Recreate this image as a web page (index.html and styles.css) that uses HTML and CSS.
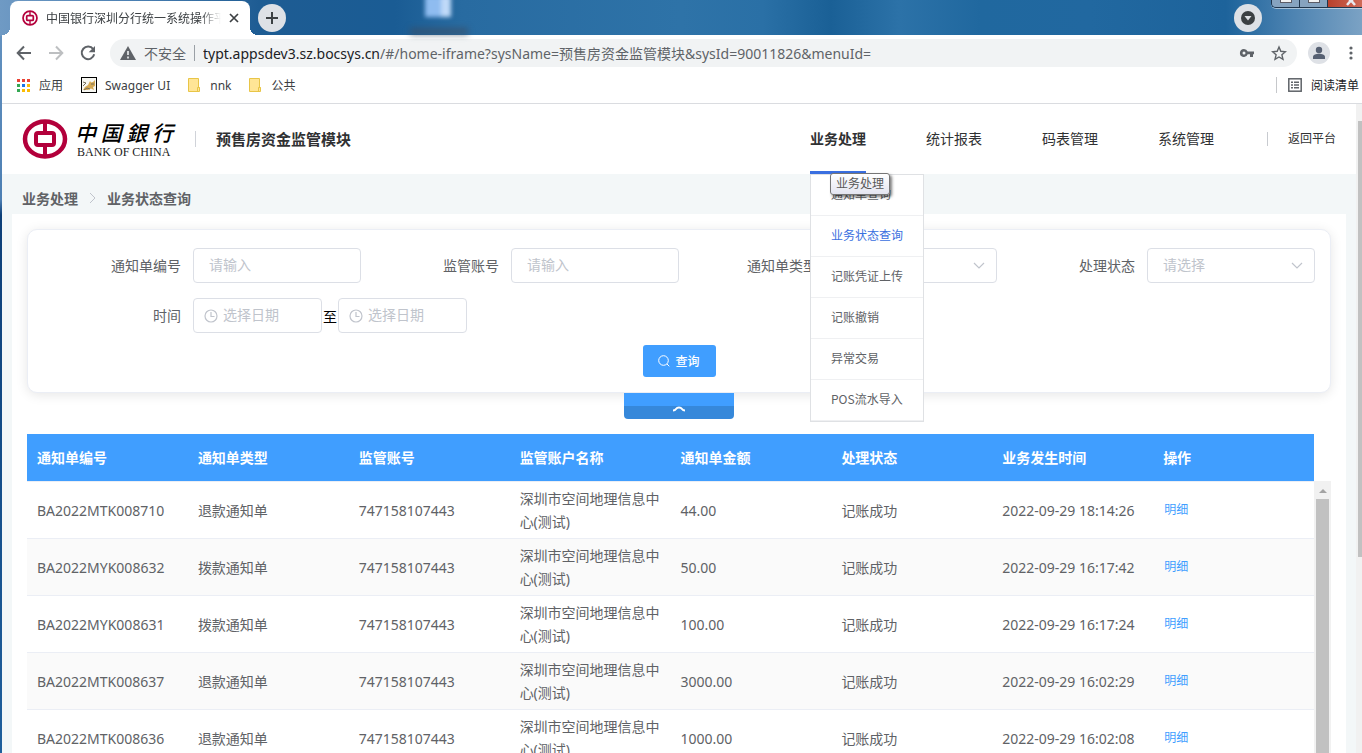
FILE: index.html
```html
<!DOCTYPE html>
<html lang="zh-CN">
<head>
<meta charset="utf-8">
<title>中国银行深圳分行统一系统操作平台</title>
<link rel="stylesheet" href="styles.css">
</head>
<body>
<div class="desktop">
  <div class="desk-icon" aria-hidden="true"></div>
  <div class="desk-label" aria-hidden="true"></div>
  <div class="window-buttons">
    <button class="win-btn" aria-label="最小化"><span class="win-min"></span></button>
    <button class="win-btn" aria-label="最大化"><span class="win-max"></span></button>
    <button class="win-btn win-close" aria-label="关闭"><svg width="12" height="6" viewBox="0 0 12 6"><path d="M2 5 L5 1.500 V0 H7 V1.500 L10 5" fill="none" stroke="#e8e8ee" stroke-width="2.500"/></svg></button>
  </div>

  <div class="browser">
    <div class="tab-strip">
      <div class="tab">
        <svg class="tab-logo" width="16" height="16" viewBox="0 0 46 46"><circle cx="23" cy="23" r="20" fill="none" stroke="#b4003c" stroke-width="5"/><rect x="13.500" y="16" width="19" height="14" rx="3" fill="none" stroke="#b4003c" stroke-width="5"/><path d="M23 3v12M23 31v12" stroke="#b4003c" stroke-width="4"/></svg>
        <span class="tab-title">中国银行深圳分行统一系统操作平台</span>
        <button class="tab-close" aria-label="关闭标签页"><svg width="10" height="10" viewBox="0 0 10 10"><path d="M1 1l8 8M9 1l-8 8" stroke="#3c4043" stroke-width="1.700"/></svg></button>
      </div>
      <button class="round-btn" aria-label="新标签页"><svg width="14" height="14" viewBox="0 0 14 14"><path d="M7 1v12M1 7h12" stroke="#3c4043" stroke-width="2"/></svg></button>
      <button class="round-btn tab-search" aria-label="搜索标签页"><svg width="14" height="14" viewBox="0 0 14 14"><circle cx="7" cy="7" r="7" fill="#3c4043"/><path d="M3.500 5h7L7 9.500z" fill="#dee1e6"/></svg></button>
    </div>

    <div class="toolbar">
      <button class="tool-btn" aria-label="后退"><svg width="16" height="16" viewBox="0 0 16 16"><path d="M15 8H2M8 1.500L1.700 8 8 14.500" fill="none" stroke="#5f6368" stroke-width="2"/></svg></button>
      <button class="tool-btn" aria-label="前进"><svg width="16" height="16" viewBox="0 0 16 16"><path d="M1 8h13M8 1.500L14.300 8 8 14.500" fill="none" stroke="#bdbfc1" stroke-width="2"/></svg></button>
      <button class="tool-btn" aria-label="刷新"><svg width="16" height="16" viewBox="0 0 16 16"><path d="M13.200 4.200A6.300 6.300 0 1 0 14.200 9.300" fill="none" stroke="#5f6368" stroke-width="2"/><path d="M15 1v6.300H8.700z" fill="#5f6368"/></svg></button>
      <div class="omnibox">
        <svg width="16" height="14" viewBox="0 0 16 14"><path d="M8 0l8 14H0z" fill="#5f6368"/><path d="M8 5v4M8 10.500v2" stroke="#f1f3f4" stroke-width="1.600"/></svg>
        <span class="unsafe">不安全</span>
        <span class="omni-sep"></span>
        <div class="url" role="textbox" aria-label="地址栏"><span class="url-host">typt.appsdev3.sz.bocsys.cn</span>/#/home-iframe?sysName=预售房资金监管模块&amp;sysId=90011826&amp;menuId=</div>
        <button class="omni-btn" aria-label="密码"><svg width="16" height="16" viewBox="0 0 16 16"><path fill-rule="evenodd" d="M5 4a4 4 0 1 0 3.700 5.300H11V12h3V9.300h1V6.500H8.700A4 4 0 0 0 5 4zM5 6.500a1.500 1.500 0 1 1 0 3 1.500 1.500 0 0 1 0-3z" fill="#5f6368"/></svg></button>
        <button class="omni-btn" aria-label="收藏"><svg width="16" height="16" viewBox="0 0 16 16"><path d="M8 2l1.800 4.300 4.700.4-3.600 3.100 1.100 4.600L8 12l-4 2.400 1.100-4.600L1.500 6.700l4.700-.4z" fill="none" stroke="#5f6368" stroke-width="1.400"/></svg></button>
      </div>
      <button class="profile" aria-label="用户"><svg width="14" height="14" viewBox="0 0 14 14"><circle cx="7" cy="4" r="3.200" fill="#566072"/><path d="M1 13v-2c0-2 3-3.200 6-3.200s6 1.200 6 3.200v2z" fill="#566072"/></svg></button>
      <button class="more" aria-label="更多"><svg width="4" height="14" viewBox="0 0 4 14"><circle cx="2" cy="2" r="1.600" fill="#5f6368"/><circle cx="2" cy="7" r="1.600" fill="#5f6368"/><circle cx="2" cy="12" r="1.600" fill="#5f6368"/></svg></button>
    </div>

    <div class="bookmarks">
      <a class="bookmark" href="#"><svg width="14" height="14" viewBox="0 0 14 14"><path d="M0 1h3v3H0zM5 1h3v3H5zM10 1h3v3h-3z" fill="#ea4335"/><path d="M0 6h3v3H0zM0 11h3v3H0z" fill="#34a853"/><path d="M5 6h3v3H5z" fill="#1a73e8"/><path d="M10 6h3v3h-3zM5 11h3v3H5zM10 11h3v3h-3z" fill="#fbbc04"/></svg>应用</a>
      <a class="bookmark" href="#"><svg width="16" height="16" viewBox="0 0 16 16"><rect x=".5" y=".5" width="15" height="15" fill="#f7f7f2" stroke="#000"/><path d="M2 13l2-3 3-2 2-4 1 1.500L12 5l2-2v6l-2 1 1 3-3-1.500L7 13z" fill="#d5a954"/><path d="M2 5l3 1-3 3M3 13l3-2 3 1M10 7h3" stroke="#77705c" fill="none"/></svg>Swagger UI</a>
      <a class="bookmark" href="#"><svg width="14" height="14" viewBox="0 0 14 14"><path d="M.5.5h10v9h1v4H.5z" fill="#ffe596" stroke="#e8c547"/><path d="M9.500 13V9.500h2" fill="none" stroke="#e8c547"/></svg>nnk</a>
      <a class="bookmark" href="#"><svg width="14" height="14" viewBox="0 0 14 14"><path d="M.5.5h10v9h1v4H.5z" fill="#ffe596" stroke="#e8c547"/><path d="M9.500 13V9.500h2" fill="none" stroke="#e8c547"/></svg>公共</a>
      <button class="reading-list"><svg width="14" height="14" viewBox="0 0 14 14"><rect x=".8" y=".8" width="12.400" height="12.400" fill="none" stroke="#5f6368" stroke-width="1.500"/><path d="M3 4.200h2M6 4.200h5M3 7h2M6 7h5M3 9.800h2M6 9.800h5" stroke="#5f6368" stroke-width="1.400"/></svg>阅读清单</button>
    </div>

    <div class="viewport">
      <div class="page">
        <header class="header">
          <div class="brand">
            <svg width="46" height="40" viewBox="0 0 46 40"><ellipse cx="23" cy="20" rx="20" ry="17.500" fill="none" stroke="#b2003b" stroke-width="4.500"/><rect x="14" y="14" width="18" height="12" rx="2" fill="none" stroke="#b2003b" stroke-width="4"/><path d="M23 3v9M23 28v9" stroke="#b2003b" stroke-width="4"/></svg>
            <div class="brand-text">
              <span class="brand-cn"><i>中</i><i>国</i><i>銀</i><i>行</i></span>
              <span class="brand-en">BANK OF CHINA</span>
            </div>
          </div>
          <h1 class="system-name">预售房资金监管模块</h1>
          <nav class="nav">
            <div class="nav-item active"><a href="#">业务处理</a>
              <div class="submenu">
                <a href="#">通知单查询</a>
                <a href="#" class="current">业务状态查询</a>
                <a href="#">记账凭证上传</a>
                <a href="#">记账撤销</a>
                <a href="#">异常交易</a>
                <a href="#">POS流水导入</a>
              </div>
              <div class="tooltip" role="tooltip">业务处理</div>
            </div>
            <div class="nav-item"><a href="#">统计报表</a></div>
            <div class="nav-item"><a href="#">码表管理</a></div>
            <div class="nav-item"><a href="#">系统管理</a></div>
          </nav>
          <a class="back-link" href="#">返回平台</a>
        </header>

        <div class="breadcrumb">
          <a href="#">业务处理</a>
          <svg width="7" height="12" viewBox="0 0 7 12"><path d="M1 1l5 5-5 5" fill="none" stroke="#c0c4cc"/></svg>
          <span>业务状态查询</span>
        </div>

        <main class="content">
          <form class="search-card" onsubmit="return false">
            <div class="fields">
              <div class="field"><label for="noticeNo">通知单编号</label><input id="noticeNo" type="text" placeholder="请输入"></div>
              <div class="field"><label for="account">监管账号</label><input id="account" type="text" placeholder="请输入"></div>
              <div class="field"><label for="noticeType">通知单类型</label><select id="noticeType"><option>请选择</option></select></div>
              <div class="field"><label for="status">处理状态</label><select id="status"><option>请选择</option></select></div>
              <div class="field dates"><label for="from">时间</label>
                <input id="from" class="date" type="text" placeholder="选择日期"><span class="to">至</span><input class="date" type="text" aria-label="结束日期" placeholder="选择日期">
              </div>
            </div>
            <button class="query" type="submit"><svg width="12" height="12" viewBox="0 0 12 12"><circle cx="5.500" cy="5.500" r="4.800" fill="none" stroke="#fff"/><path d="M9 9l2.300 2.300" stroke="#fff"/></svg>查询</button>
          </form>
          <button class="collapse" aria-label="收起"><svg width="14" height="6" viewBox="0 0 14 6"><path d="M1 4.500Q3 4.500 4 3T7 1.500 10 3t3 1.500" fill="none" stroke="#fff" stroke-width="2"/></svg></button>

          <div class="table-wrap">
            <table>
              <thead><tr><th>通知单编号</th><th>通知单类型</th><th>监管账号</th><th>监管账户名称</th><th>通知单金额</th><th>处理状态</th><th>业务发生时间</th><th>操作</th></tr></thead>
              <tbody>
                <tr><td>BA2022MTK008710</td><td>退款通知单</td><td>747158107443</td><td>深圳市空间地理信息中心(测试)</td><td>44.00</td><td>记账成功</td><td>2022-09-29 18:14:26</td><td><a href="#">明细</a></td></tr>
                <tr><td>BA2022MYK008632</td><td>拨款通知单</td><td>747158107443</td><td>深圳市空间地理信息中心(测试)</td><td>50.00</td><td>记账成功</td><td>2022-09-29 16:17:42</td><td><a href="#">明细</a></td></tr>
                <tr><td>BA2022MYK008631</td><td>拨款通知单</td><td>747158107443</td><td>深圳市空间地理信息中心(测试)</td><td>100.00</td><td>记账成功</td><td>2022-09-29 16:17:24</td><td><a href="#">明细</a></td></tr>
                <tr><td>BA2022MTK008637</td><td>退款通知单</td><td>747158107443</td><td>深圳市空间地理信息中心(测试)</td><td>3000.00</td><td>记账成功</td><td>2022-09-29 16:02:29</td><td><a href="#">明细</a></td></tr>
                <tr><td>BA2022MTK008636</td><td>退款通知单</td><td>747158107443</td><td>深圳市空间地理信息中心(测试)</td><td>1000.00</td><td>记账成功</td><td>2022-09-29 16:02:08</td><td><a href="#">明细</a></td></tr>
              </tbody>
            </table>
            <div class="table-scroll"><span class="arrow"></span><span class="thumb"></span></div>
          </div>
        </main>
      </div>
      <div class="page-scroll"><span class="page-thumb"></span></div>
    </div>
  </div>
</div>
</body>
</html>
```
FILE: styles.css
```css
* { box-sizing: border-box; }

body {
  margin: 0;
  overflow: hidden;
  font-family: "Noto Sans", "Noto Sans CJK SC", sans-serif;
  font-size: 14px;
  color: #606266;
}

a { color: inherit; text-decoration: none; }

button {
  margin: 0;
  padding: 0;
  border: 0;
  background: none;
  font: inherit;
  color: inherit;
  display: flex;
  align-items: center;
  justify-content: center;
}

svg { display: block; flex: none; }

/* Desktop behind the browser */
.desktop {
  position: relative;
  height: 100vh;
  overflow: hidden;
  padding-left: 2px;
  background:
    linear-gradient(90deg, #6f9ac4 0, #4a7fb2 10%, #1e5c93 19%, #1a5c94 29%, #286ba1 34%, #2e73a8 50%, #2a70a6 56%, #1a6096 61%, #2c72a8 66%, #20689f 72%, #2168a0 80%, #1d639b 90%, #4e84b2 95%, #7ba2c4 100%) 0 0 / 100% 36px no-repeat,
    linear-gradient(180deg, #6795c2 0, #4d7fb3 200px, #0d3f78 215px, #15508c 500px, #1f5f9c 100%);
}

.desk-icon {
  position: absolute;
  left: 425px;
  top: -4px;
  width: 26px;
  height: 21px;
  background: linear-gradient(90deg, #8fbcf0 60%, #c0daf8 60%);
  filter: blur(2px);
}

.desk-label {
  position: absolute;
  left: 410px;
  top: 28px;
  width: 58px;
  height: 7px;
  background: rgba(60, 75, 95, .6);
  filter: blur(3px);
}

.window-buttons {
  position: absolute;
  right: 0;
  top: 0;
  width: 91px;
  height: 8px;
  display: flex;
  border: 1px solid #20364d;
  border-width: 0 0 1px 1px;
  border-bottom-left-radius: 5px;
  box-shadow: 0 1px 0 rgba(255, 255, 255, .5);
  overflow: hidden;
}

.win-btn {
  width: 28px;
  height: 7px;
  align-items: flex-start;
  background: #86a3bf;
  border-right: 1px solid #20364d;
}

.win-close { flex: 1; padding-left: 12px; background: linear-gradient(90deg, #b8402c, #cf6a58); border-right: 0; }
.win-min, .win-max { width: 12px; height: 3px; background: #f2f2f2; border: 1px solid #5c5c66; border-top: 0; }

/* Browser chrome */
.browser { height: 100%; display: flex; flex-direction: column; }

.tab-strip {
  height: 35px;
  flex: none;
  display: flex;
  align-items: center;
  padding: 1px 100px 0 8px;
  gap: 8px;
}

.tab {
  position: relative;
  align-self: stretch;
  width: 240px;
  display: flex;
  align-items: center;
  padding: 0 11px 0 12px;
  gap: 8px;
  background: #fff;
  border-radius: 8px 8px 0 0;
}

.tab::before, .tab::after {
  content: "";
  position: absolute;
  bottom: 0;
  width: 8px;
  height: 8px;
}

.tab::before { left: -8px; background: radial-gradient(circle at 0 0, transparent 8px, #fff 8px); }
.tab::after { right: -8px; background: radial-gradient(circle at 100% 0, transparent 8px, #fff 8px); }

.tab-title {
  flex: 1;
  font-size: 12px;
  color: #3c4043;
  white-space: nowrap;
  overflow: hidden;
  -webkit-mask-image: linear-gradient(90deg, #000 88%, transparent);
  mask-image: linear-gradient(90deg, #000 88%, transparent);
}

.tab-close { width: 10px; height: 10px; }

.round-btn { width: 28px; height: 28px; border-radius: 50%; background: #dee1e6; }
.tab-search { margin-left: auto; }

.toolbar {
  height: 36px;
  flex: none;
  display: flex;
  align-items: center;
  padding: 0 9px 0 14px;
  gap: 16px;
  background: #fff;
}

.tool-btn { width: 16px; height: 16px; }

.omnibox {
  flex: 1;
  height: 28px;
  display: flex;
  align-items: center;
  margin: 0 -5px 0 -2px;
  padding: 0 10px;
  gap: 8px;
  border-radius: 14px;
  background: #f1f3f4;
}

.omni-sep { width: 1px; height: 16px; background: #9aa0a6; }
.unsafe, .url { padding-bottom: 1px; }
.unsafe { color: #5f6368; }
.url { flex: 1; white-space: nowrap; overflow: hidden; color: #5f6368; }
.url-host { color: #202124; }
.omni-btn { width: 16px; height: 16px; margin-left: 8px; }
.profile { width: 22px; height: 22px; border-radius: 50%; background: #dee1e6; }
.more { width: 4px; height: 16px; margin-left: 3px; }

.bookmarks {
  height: 33px;
  flex: none;
  display: flex;
  align-items: center;
  gap: 18px;
  padding: 0 3px 4px 15px;
  background: #fff;
  border-bottom: 1px solid #dadce0;
  font-size: 12px;
  color: #3c4043;
}

.bookmark { display: flex; align-items: center; gap: 8px; }

.reading-list {
  margin-left: auto;
  gap: 9px;
  height: 16px;
  padding-left: 11px;
  border-left: 1px solid #c6c8cb;
  color: #202124;
}

/* Page */
.viewport { flex: 1; min-height: 0; display: flex; background: #f3f7f8; }

.page { flex: 1; min-width: 0; overflow: hidden; }

.header {
  height: 70px;
  display: flex;
  align-items: center;
  padding: 0 20px;
  background: #fff;
  color: #303133;
}

.brand { display: flex; align-items: center; gap: 7px; }
.brand-text { width: 98px; display: flex; flex-direction: column; color: #222; }

.brand-cn {
  display: flex;
  justify-content: space-between;
  font: italic 500 21px/26px "Noto Sans CJK TC", "Noto Sans CJK SC", sans-serif;
  color: #000;
}

.brand-en { font: 400 12px/14px "Liberation Serif", serif; white-space: nowrap; padding-left: 2px; }

.system-name {
  margin: 0 0 0 22px;
  padding-left: 20px;
  border-left: 1px solid #d0d3d9;
  font-size: 15px;
  line-height: 16px;
}

.nav { margin-left: auto; display: flex; gap: 60px; align-self: stretch; }
.nav-item { position: relative; line-height: 70px; }
.nav-item.active { font-weight: 700; border-bottom: 3px solid #3a6fe0; }

.submenu {
  position: absolute;
  z-index: 5;
  left: 0;
  top: 70px;
  width: 114px;
  background: #fff;
  border: 1px solid #dfe1e4;
  font: 400 12px/38px "Noto Sans CJK SC", sans-serif;
  color: #606266;
}

.submenu a { display: block; padding: 0 0 2px 20px; border-bottom: 1px solid #eff0f2; }
.submenu .current { color: #3a6fe0; }

.tooltip {
  position: absolute;
  z-index: 6;
  left: 20px;
  top: 69px;
  padding: 0 5px;
  border: 1px solid #767676;
  border-radius: 3px;
  background: linear-gradient(#fff, #e4e5f0);
  box-shadow: 2px 2px 3px rgba(0, 0, 0, .5);
  font-size: 12px;
  line-height: 20px;
  font-weight: 400;
  color: #575757;
  white-space: nowrap;
}

.back-link {
  margin-left: 53px;
  padding-left: 20px;
  border-left: 1px solid #c8cbd0;
  font-size: 12px;
  line-height: 14px;
}

.breadcrumb {
  height: 40px;
  display: flex;
  align-items: center;
  gap: 11px;
  padding: 8px 20px 0;
  font-weight: 700;
}

.content {
  margin: 0 10px;
  padding: 15px 15px 0;
  background: #fff;
}

.search-card {
  padding: 18px 15px 15px;
  border: 1px solid #ebeef5;
  border-radius: 10px;
  box-shadow: 0 2px 12px rgba(0, 0, 0, .1);
  background: #fff;
}

.fields { display: grid; grid-template-columns: repeat(4, minmax(0, 1fr)); row-gap: 15px; }
.field { display: flex; align-items: center; }
.field label { width: 150px; flex: none; padding: 0 12px 2px 0; text-align: right; }
.dates { grid-column: span 2; }
.to { width: 16px; text-align: center; color: #000; }

input, select {
  flex: 1;
  min-width: 0;
  height: 35px;
  margin: 0;
  padding: 0 15px 2px;
  border: 1px solid #dcdfe6;
  border-radius: 4px;
  background: #fff;
  font: inherit;
  color: #c0c4cc;
  outline: 0;
}

input::placeholder { color: #c0c4cc; opacity: 1; }

select {
  appearance: none;
  background: #fff url("data:image/svg+xml,%3Csvg xmlns='http://www.w3.org/2000/svg' width='12' height='8'%3E%3Cpath d='M1 1l5 5 5-5' fill='none' stroke='%23c0c4cc' stroke-width='1.2'/%3E%3C/svg%3E") no-repeat right 11px center;
}

input.date {
  flex: none;
  width: 129px;
  padding: 0 0 2px 29px;
  background: #fff url("data:image/svg+xml,%3Csvg xmlns='http://www.w3.org/2000/svg' width='14' height='14'%3E%3Cg fill='none' stroke='%23c0c4cc' stroke-width='1.2'%3E%3Ccircle cx='7' cy='7' r='6'/%3E%3Cpath d='M7 3v4.5h3.5'/%3E%3C/g%3E%3C/svg%3E") no-repeat 10px center;
}

.query {
  margin: 12px auto 0;
  width: 73px;
  height: 32px;
  gap: 5px;
  border-radius: 3px;
  background: #409eff;
  color: #fff;
  font-size: 12px;
  font-weight: 500;
}

.collapse {
  position: relative;
  margin: 0 auto;
  width: 110px;
  height: 26px;
  padding-top: 6px;
  border-radius: 0 0 4px 4px;
  background: linear-gradient(#409eff 50%, #3688da 50%);
}

.table-wrap { margin-top: 15px; display: flex; }

table { flex: 1; table-layout: fixed; width: 100%; border-collapse: separate; border-spacing: 0; }

th {
  height: 48px;
  padding: 0 10px 2px;
  background: #409eff;
  border-bottom: 1px solid #ebeef5;
  color: #fff;
  text-align: left;
}

td {
  height: 57px;
  padding: 5px 10px;
  border-bottom: 1px solid #ebeef5;
  line-height: 23px;
}

tbody tr:nth-child(even) { background: #fafafa; }
td a { display: block; padding: 0 1px 2px; font-size: 12px; color: #409eff; }

.table-scroll {
  flex: none;
  width: 17px;
  margin-top: 47px;
  display: flex;
  flex-direction: column;
  align-items: center;
  background: #f1f1f1;
}

.arrow {
  margin: 8px 0 6px;
  border: 4px solid transparent;
  border-top: 0;
  border-bottom-color: #a3a3a3;
}

.thumb { flex: 1; width: 13px; background: #c1c1c1; }

.page-scroll { width: 6px; padding: 17px 0 0 2px; background: #f1f1f1; }
.page-thumb { display: block; height: 69%; background: #c1c1c1; }
```
